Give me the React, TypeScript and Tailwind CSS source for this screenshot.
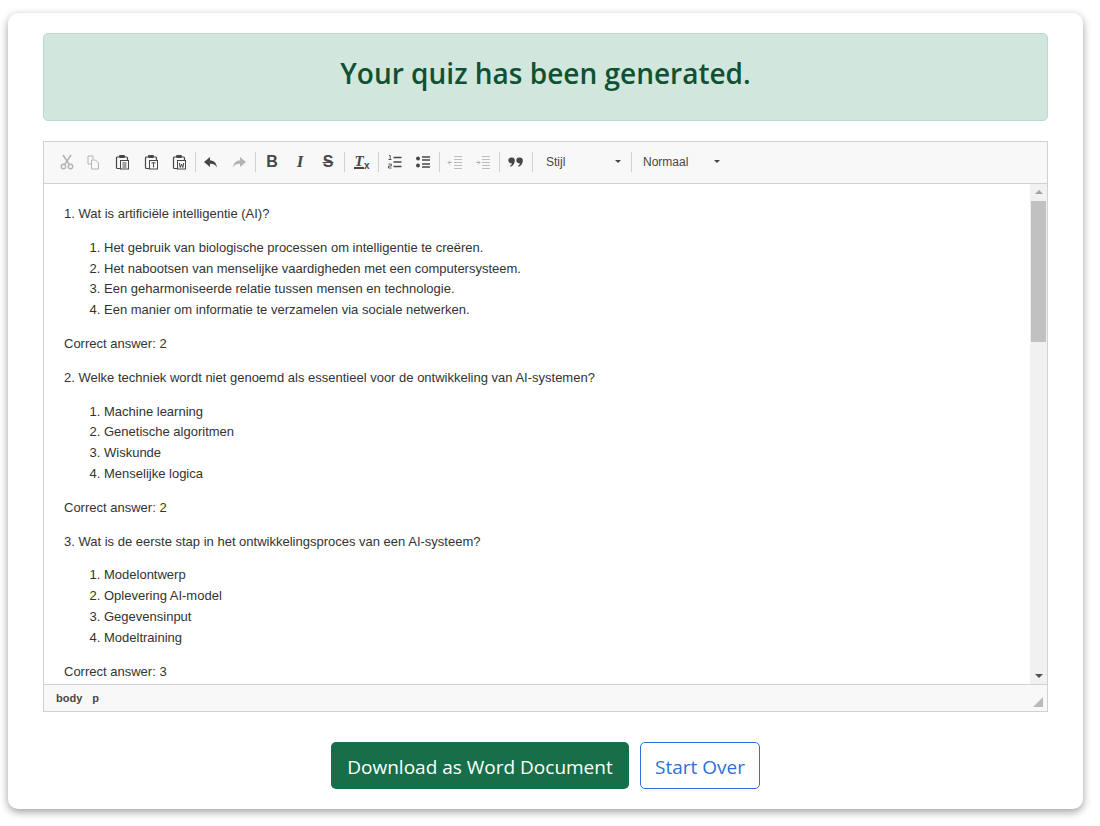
import type { ReactNode } from "react";

const questions = [
    {
        title: "1. Wat is artificiële intelligentie (AI)?",
        options: [
            "Het gebruik van biologische processen om intelligentie te creëren.",
            "Het nabootsen van menselijke vaardigheden met een computersysteem.",
            "Een geharmoniseerde relatie tussen mensen en technologie.",
            "Een manier om informatie te verzamelen via sociale netwerken.",
        ],
        answer: 2,
    },
    {
        title: "2. Welke techniek wordt niet genoemd als essentieel voor de ontwikkeling van AI-systemen?",
        options: ["Machine learning", "Genetische algoritmen", "Wiskunde", "Menselijke logica"],
        answer: 2,
    },
    {
        title: "3. Wat is de eerste stap in het ontwikkelingsproces van een AI-systeem?",
        options: ["Modelontwerp", "Oplevering AI-model", "Gegevensinput", "Modeltraining"],
        answer: 3,
    },
];

function Btn({ children, off, className = "" }: { children: ReactNode; off?: boolean; className?: string }) {
    return (
        <span className={`flex h-[28px] w-[28px] items-center justify-center ${off ? "text-[#b4b4b4]" : "text-[#474747]"} ${className}`}>
            {children}
        </span>
    );
}

function Sep({ className = "mr-[1px]" }: { className?: string }) {
    return <span className={`ml-[2px] h-[20px] w-px bg-[#d1d1d1] ${className}`} />;
}

function Icon({ children }: { children: ReactNode }) {
    return (
        <svg width="16" height="16" viewBox="0 0 16 16" fill="none" stroke="currentColor" strokeWidth="1">
            {children}
        </svg>
    );
}

function Clipboard({ children }: { children: ReactNode }) {
    return (
        <Icon>
            <path d="M5 3H3.500a1 1 0 0 0-1 1v9.500a1 1 0 0 0 1 1H6M11 3h1.500a1 1 0 0 1 1 1v2" strokeWidth="1.2" />
            <rect x="5" y="1" width="6" height="3" rx="1" fill="currentColor" stroke="none" />
            <rect x="6.500" y="6.500" width="8" height="8.500" fill="#f8f8f8" />
            {children}
        </Icon>
    );
}

function Caret() {
    return <span className="h-0 w-0 border-x-[3px] border-t-[3px] border-x-transparent border-t-[#474747]" />;
}

function Toolbar() {
    return (
        <div className="flex h-[42px] items-center border-b border-[#d1d1d1] bg-[#f8f8f8] pb-[2px] pl-[9px] text-[#474747]">
            <Btn off>
                <Icon>
                    <path d="M4 1l6 9M12 1l-6 9" strokeWidth="1.6" />
                    <circle cx="4.500" cy="12.500" r="2.200" strokeWidth="1.4" />
                    <circle cx="11.500" cy="12.500" r="2.200" strokeWidth="1.4" />
                </Icon>
            </Btn>
            <Btn off className="-ml-[2px] mr-[1px]">
                <Icon>
                    <path d="M8 5V2H3v8h3" />
                    <path d="M6.500 6h4l3 3v6h-7z" />
                </Icon>
            </Btn>
            <Btn className="mr-[1px]">
                <Clipboard>
                    <path d="M8.500 9h4M8.500 11h4M8.500 13h4" />
                </Clipboard>
            </Btn>
            <Btn>
                <Clipboard>
                    <path d="M8.500 8.800h4M10.500 8.800V13.500" />
                </Clipboard>
            </Btn>
            <Btn>
                <Clipboard>
                    <path d="M8.300 9l.9 4.500L10.500 10l1.300 3.500.9-4.500" />
                </Clipboard>
            </Btn>
            <Sep />
            <Btn>
                <Icon>
                    <path d="M7 3L1 8l6 5V9.800c3.500 0 5.500 1 7 3.700C13.500 9 11 6.500 7 6.200z" fill="currentColor" stroke="none" />
                </Icon>
            </Btn>
            <Btn off>
                <Icon>
                    <path d="M9 3l6 5-6 5V9.800c-3.500 0-5.500 1-7 3.700C2.500 9 5 6.500 9 6.200z" fill="currentColor" stroke="none" />
                </Icon>
            </Btn>
            <Sep className="mr-[2px]" />
            <Btn>
                <span className="font-['Liberation_Sans',sans-serif] text-[16px] leading-none font-bold">B</span>
            </Btn>
            <Btn>
                <span className="font-['Liberation_Serif',serif] text-[17px] leading-none font-bold italic">I</span>
            </Btn>
            <Btn>
                <span className="font-['Liberation_Sans',sans-serif] text-[16px] leading-none font-bold line-through">S</span>
            </Btn>
            <Sep className="mr-[3px]" />
            <Btn>
                <span className="flex h-[16px] w-[16px] font-['Liberation_Serif',serif] text-[15px] leading-[14px] font-bold italic">
                    <span className="h-[15px] w-[10px] border-b-2 border-[#474747] text-center">T</span>
                    <span className="mt-[7px] font-['Liberation_Sans',sans-serif] text-[10px] leading-[10px] not-italic">x</span>
                </span>
            </Btn>
            <Sep className="mr-[2px]" />
            <Btn>
                <Icon>
                    <path d="M6.500 3.500h8M6.500 8h8M6.500 12.500h8" strokeWidth="1.4" />
                    <path d="M2 1.500h1.200v4M1.500 5.500h3M1.500 10h2.800v2H1.500v2h3" strokeWidth="0.9" />
                </Icon>
            </Btn>
            <Btn>
                <Icon>
                    <circle cx="3" cy="4.500" r="2" fill="currentColor" stroke="none" />
                    <circle cx="3" cy="11.500" r="2" fill="currentColor" stroke="none" />
                    <path d="M7 3h8M7 6h8M7 10h8M7 13h8" strokeWidth="1.300" />
                </Icon>
            </Btn>
            <Sep />
            <Btn off>
                <Icon>
                    <path d="M7 2.500h8M7 5.500h8M7 8.500h8M7 11.500h8M7 14.500h8" strokeWidth="0.900" />
                    <path d="M5 8.500H1M3 6.500l-2 2 2 2" />
                </Icon>
            </Btn>
            <Btn off>
                <Icon>
                    <path d="M7 2.500h8M7 5.500h8M7 8.500h8M7 11.500h8M7 14.500h8" strokeWidth="0.900" />
                    <path d="M1 8.500h4M3 6.500l2 2-2 2" />
                </Icon>
            </Btn>
            <Sep className="mr-[2px]" />
            <Btn>
                <Icon>
                    <path d="M4 3.500a3 3 0 0 1 2.800 3.200c0 3-1.800 5.300-4.300 6l-.4-.9c1-.5 1.800-1.400 2-2.500A3 3 0 1 1 4 3.500zM12 3.500a3 3 0 0 1 2.800 3.200c0 3-1.800 5.300-4.300 6l-.4-.9c1-.5 1.800-1.400 2-2.500A3 3 0 1 1 12 3.500z" fill="currentColor" stroke="none" />
                </Icon>
            </Btn>
            <Sep className="mr-0" />
            <span className="flex w-[98px] items-center pl-[13px] pr-[10px]">
                <span className="flex-1">Stijl</span>
                <Caret />
            </span>
            <span className="h-[20px] w-px bg-[#d1d1d1]" />
            <span className="flex w-[88px] items-center pl-[11px]">
                <span className="flex-1">Normaal</span>
                <Caret />
            </span>
        </div>
    );
}

function Scrollbar() {
    return (
        <div className="flex w-[17px] flex-col items-center bg-[#f1f1f1]">
            <span className="mt-[6px] h-0 w-0 border-x-[4px] border-b-[4px] border-x-transparent border-b-[#a3a3a3]" />
            <span className="mt-[7px] h-[141px] w-[15px] bg-[#c1c1c1]" />
            <span className="mt-auto mb-[6px] h-0 w-0 border-x-[4px] border-t-[4px] border-x-transparent border-t-[#505050]" />
        </div>
    );
}

export default function App() {
    return (
        <div className="min-h-[826px] bg-white pt-[13px] pl-[8px]">
            <div className="h-[796px] w-[1075px] rounded-[10px] bg-white px-[35px] pt-[20px] shadow-[0_3px_8px_rgba(0,0,0,0.38)]">
                <div className="flex h-[88px] items-center justify-center rounded-[5px] border border-[#badbcc] bg-[#d1e7dd] pb-[8px]">
                    <h1 className="font-['Open_Sans',sans-serif] text-[28px] font-semibold text-[#0f5132]">Your quiz has been generated.</h1>
                </div>

                <div className="mt-[20px] border border-[#d1d1d1] font-['Liberation_Sans',sans-serif] text-[12px] text-[#333]">
                    <Toolbar />
                    <div className="flex h-[500px]">
                        <div className="flex-1 overflow-hidden px-[20px] pt-[20px] text-[13px] leading-[20.8px]">
                            {questions.map((q) => (
                                <div key={q.title}>
                                    <p>{q.title}</p>
                                    <ol className="my-[13px] list-decimal pl-[40px]">
                                        {q.options.map((o) => (
                                            <li key={o}>{o}</li>
                                        ))}
                                    </ol>
                                    <p className="mb-[13px]">Correct answer: {q.answer}</p>
                                </div>
                            ))}
                        </div>
                        <Scrollbar />
                    </div>
                    <div className="relative flex h-[27px] items-center gap-[10px] border-t border-[#d1d1d1] bg-[#f8f8f8] pl-[12px] text-[11px] font-bold text-[#484848]">
                        <span>body</span>
                        <span>p</span>
                        <span className="absolute right-[4px] bottom-[4px] h-0 w-0 border-b-[10px] border-l-[10px] border-b-[#bbb] border-l-transparent" />
                    </div>
                </div>

                <div className="mt-[30px] flex justify-center gap-[11px] font-['Open_Sans',sans-serif] text-[19px]">
                    <span className="flex h-[47px] w-[298px] items-center justify-center rounded-[5px] bg-[#166f48] pt-[3px] text-white">Download as Word Document</span>
                    <span className="flex h-[47px] w-[120px] items-center justify-center rounded-[5px] border border-[#2f6fd6] pt-[3px] text-[#2f6fd6]">Start Over</span>
                </div>
            </div>
        </div>
    );
}
